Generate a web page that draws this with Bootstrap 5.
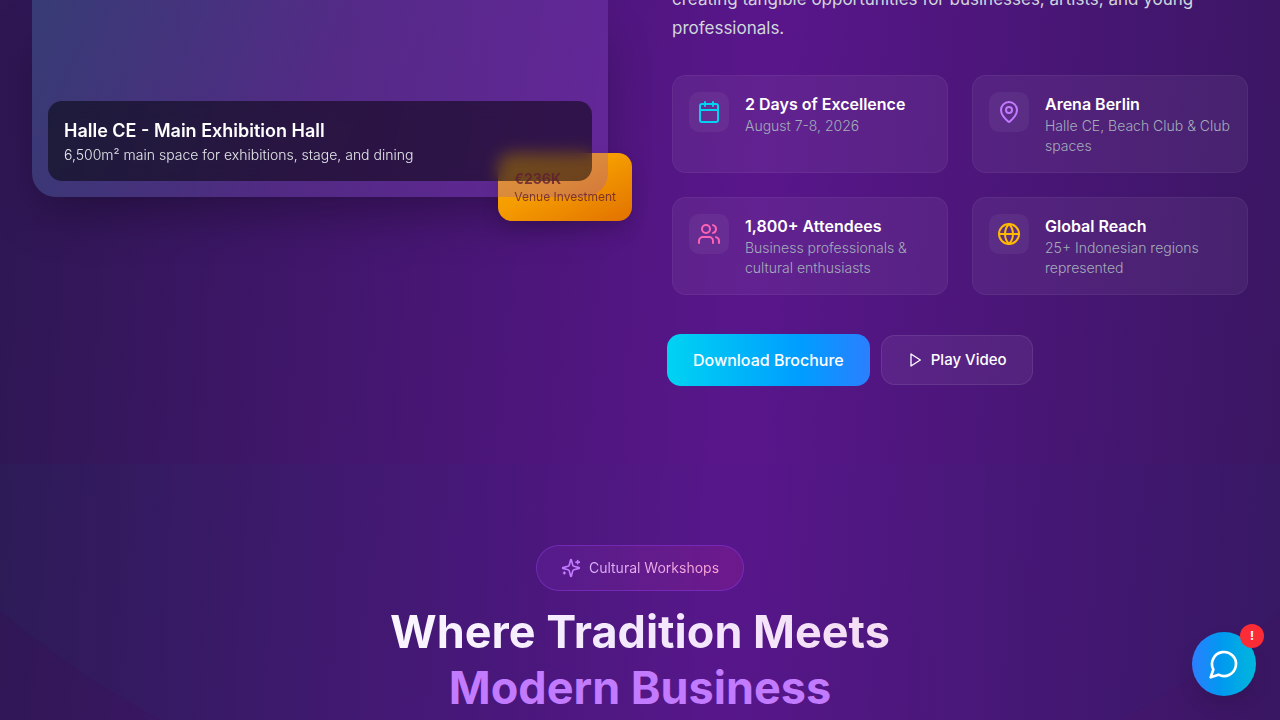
<!DOCTYPE html>
<html lang="en">
<head>
<meta charset="utf-8">
<meta name="viewport" content="width=device-width, initial-scale=1">
<title>Venue and Cultural Workshops</title>
<link href="https://cdn.jsdelivr.net/npm/bootstrap@5.3.0/dist/css/bootstrap.min.css" rel="stylesheet">
<style>
  body {
    font-family: Inter, "Liberation Sans", sans-serif;
    color: #fff;
    background: linear-gradient(94deg, #0f172b -40%, #59168b 58%, #0f172b 154%);
  }
  svg { fill: none; stroke: currentColor; stroke-width: 2; stroke-linecap: round; stroke-linejoin: round; flex-shrink: 0; }
  .venue-section { padding: 0 32px 78px; }
  .venue-section .row { --bs-gutter-x: 64px; }

  /* hall picture with the investment tag tucked behind it */
  .hall { height: 197px; border-radius: 0 0 24px 24px; box-shadow: 0 25px 50px -12px rgba(0,0,0,.35); }
  .hall-panel {
    z-index: 1;
    border-radius: 0 0 24px 24px;
    background: linear-gradient(115deg, rgba(68,120,170,.38), rgba(130,90,200,.29) 50%, rgba(150,80,214,.28));
  }
  .hall-caption {
    border-radius: 14px;
    padding: 16px;
    background: rgba(0,0,0,.5);
    backdrop-filter: blur(8px);
  }
  .hall-caption h2 { font-size: 18px; line-height: 28px; }
  .hall-caption p { font-size: 14px; line-height: 20px; font-weight: 300; color: #e5e7eb; }
  .invest-box {
    right: -24px; bottom: -24px;
    padding: 16px;
    border-radius: 14px;
  }
  .invest-back {
    background: linear-gradient(155deg, #ffb000, #f59c00 45%, #e17100);
    box-shadow: 0 10px 20px -3px rgba(0,0,0,.2);
  }
  .invest-text { z-index: 2; color: rgba(95,30,50,.8); }
  .invest-box strong { font-size: 14px; line-height: 20px; }
  .invest-box span { font-size: 12px; line-height: 16px; }

  .intro { font-size: 17px; line-height: 29px; margin: -15px 0 32px; color: #d1d5dc; }
  .feature-grid { display: grid; grid-template-columns: repeat(2, 1fr); gap: 24px; }
  .feature {
    padding: 16px; gap: 16px;
    border: 1px solid rgba(255,255,255,.1);
    border-radius: 14px;
    background: rgba(255,255,255,.055);
    background-clip: padding-box;
  }
  .feature-icon { width: 40px; height: 40px; border-radius: 10px; background: rgba(255,255,255,.05); }
  .feature h3 { font-size: 16px; line-height: 24px; }
  .feature p { font-size: 14px; line-height: 20px; font-weight: 300; color: #a4acba; }
  .cyan { color: #00d3f2; } .violet { color: #c27aff; } .pink { color: #fb64b6; } .amber { color: #ffba00; }

  .actions { gap: 11px; margin: 39px 0 0 -5px; }
  .btn-brochure, .btn-video { color: #fff; border-radius: 14px; font-weight: 500; line-height: 24px; }
  .btn-brochure { font-size: 16px; padding: 14px 26px; border: 0; background: linear-gradient(90deg, #00d3f2, #009dff 66%, #2b7fff); }
  .btn-video { font-size: 15px; padding: 12px 25px; border: 1px solid rgba(255,255,255,.14); background: rgba(255,255,255,.06); background-clip: padding-box; }

  .workshops { padding-top: 81px; }
  .workshops::before {
    content: ""; position: absolute; inset: 0;
    background: linear-gradient(90deg, rgba(25,75,110,.1), rgba(30,60,140,.07) 30%, rgba(30,60,140,.02) 60%, rgba(30,60,140,.07));
    mask-image: radial-gradient(circle at 50% -624px, #000 1000px, transparent 1004px);
    -webkit-mask-image: radial-gradient(circle at 50% -624px, #000 1000px, transparent 1004px);
  }
  .topic-pill {
    gap: 8px; padding: 12px 24px;
    border: 1px solid rgba(173,70,255,.4);
    border-radius: 50px;
    background: linear-gradient(90deg, rgba(173,70,255,.1), rgba(246,51,154,.14));
    background-clip: padding-box;
  }
  .topic-pill span { font-size: 14px; line-height: 20px; }
  .clip-text { color: transparent; background-clip: text; -webkit-background-clip: text; }
  .topic-pill .clip-text { background-image: linear-gradient(90deg, #dab2ff, #fda5d5); }
  .workshops h2 { font-size: 45px; line-height: 56px; margin-top: 13px; }
  .workshops h2 .title-line { background-image: linear-gradient(90deg, #faf5ff, #f3e8ff 50%, #f5def3); }

  .chat { right: 24px; bottom: 24px; z-index: 5; width: 64px; height: 64px; border: 0; color: #fff;
    background: linear-gradient(90deg, #2b7fff, #0099f0 45%, #00b8db); box-shadow: 0 10px 20px -4px rgba(0,0,0,.15); }
  .chat-alert { top: -8px; right: -8px; width: 24px; height: 24px; background: #fb2c36; font-size: 12px; }
</style>
</head>
<body class="d-flex flex-column min-vh-100">
<section class="venue-section container-fluid">
  <div class="row">
    <div class="col-lg-6">
      <div class="hall position-relative">
        <div class="invest-box invest-back position-absolute" aria-hidden="true"><div class="invisible d-flex flex-column"><strong>&nbsp;</strong><span>Venue Investment</span></div></div>
        <div class="hall-panel position-relative h-100 d-flex flex-column justify-content-end p-3">
          <div class="hall-caption">
            <h2 class="fw-semibold mb-0">Halle CE - Main Exhibition Hall</h2>
            <p class="mb-0">6,500m² main space for exhibitions, stage, and dining</p>
          </div>
        </div>
        <div class="invest-box invest-text position-absolute d-flex flex-column"><strong>€236K</strong><span>Venue Investment</span></div>
      </div>
    </div>
    <div class="col-lg-6">
      <p class="intro">creating tangible opportunities for businesses, artists, and young professionals.</p>
      <div class="feature-grid">
        <article class="feature d-flex align-items-start">
          <div class="feature-icon cyan d-flex flex-shrink-0 align-items-center justify-content-center"><svg width="24" height="24" viewBox="0 0 24 24"><path d="M8 2v4M16 2v4M3 10h18"/><rect x="3" y="4" width="18" height="18" rx="2"/></svg></div>
          <div><h3 class="fw-semibold mb-0">2 Days of Excellence</h3><p class="mb-0">August 7-8, 2026</p></div>
        </article>
        <article class="feature d-flex align-items-start">
          <div class="feature-icon violet d-flex flex-shrink-0 align-items-center justify-content-center"><svg width="24" height="24" viewBox="0 0 24 24"><path d="M20 10c0 4.993-5.539 10.193-7.399 11.799a1 1 0 0 1-1.202 0C9.539 20.193 4 14.993 4 10a8 8 0 0 1 16 0"/><circle cx="12" cy="10" r="3"/></svg></div>
          <div><h3 class="fw-semibold mb-0">Arena Berlin</h3><p class="mb-0">Halle CE, Beach Club &amp; Club spaces</p></div>
        </article>
        <article class="feature d-flex align-items-start">
          <div class="feature-icon pink d-flex flex-shrink-0 align-items-center justify-content-center"><svg width="24" height="24" viewBox="0 0 24 24"><path d="M16 21v-2a4 4 0 0 0-4-4H6a4 4 0 0 0-4 4v2"/><circle cx="9" cy="7" r="4"/><path d="M22 21v-2a4 4 0 0 0-3-3.87M16 3.13a4 4 0 0 1 0 7.75"/></svg></div>
          <div><h3 class="fw-semibold mb-0">1,800+ Attendees</h3><p class="mb-0">Business professionals &amp; cultural enthusiasts</p></div>
        </article>
        <article class="feature d-flex align-items-start">
          <div class="feature-icon amber d-flex flex-shrink-0 align-items-center justify-content-center"><svg width="24" height="24" viewBox="0 0 24 24"><circle cx="12" cy="12" r="10"/><path d="M12 2a14.5 14.5 0 0 0 0 20 14.5 14.5 0 0 0 0-20M2 12h20"/></svg></div>
          <div><h3 class="fw-semibold mb-0">Global Reach</h3><p class="mb-0">25+ Indonesian regions represented</p></div>
        </article>
      </div>
      <div class="actions d-flex flex-wrap align-items-center">
        <button type="button" class="btn btn-brochure">Download Brochure</button>
        <button type="button" class="btn btn-video d-inline-flex align-items-center gap-2"><svg width="16" height="16" viewBox="0 0 24 24"><path d="M6 3l14 9-14 9z"/></svg>Play Video</button>
      </div>
    </div>
  </div>
</section>

<section class="workshops position-relative flex-grow-1 text-center">
  <div class="position-relative">
    <div class="topic-pill d-inline-flex align-items-center">
      <svg class="violet" width="20" height="20" viewBox="0 0 24 24"><path d="M9.937 15.5A2 2 0 0 0 8.5 14.063l-6.135-1.582a.5.5 0 0 1 0-.962L8.5 9.936A2 2 0 0 0 9.937 8.5l1.582-6.135a.5.5 0 0 1 .963 0L14.063 8.5A2 2 0 0 0 15.5 9.937l6.135 1.581a.5.5 0 0 1 0 .964L15.5 14.063a2 2 0 0 0-1.437 1.437l-1.582 6.135a.5.5 0 0 1-.963 0zM20 3v4M22 5h-4M4 17v2M5 18H3"/></svg>
      <span class="clip-text">Cultural Workshops</span>
    </div>
    <h2 class="fw-bold mb-0"><span class="clip-text title-line">Where Tradition Meets</span><br><span class="violet">Modern Business</span></h2>
  </div>
</section>

<button type="button" class="chat position-fixed rounded-circle d-flex align-items-center justify-content-center p-0" aria-label="Open chat">
  <svg width="32" height="32" viewBox="0 0 24 24"><path d="M7.9 20A9 9 0 1 0 4 16.1L2 22Z"/></svg>
  <span class="chat-alert position-absolute rounded-circle d-flex align-items-center justify-content-center fw-bold">!</span>
</button>
<script src="https://cdn.jsdelivr.net/npm/bootstrap@5.3.0/dist/js/bootstrap.bundle.min.js"></script>
</body>
</html>
